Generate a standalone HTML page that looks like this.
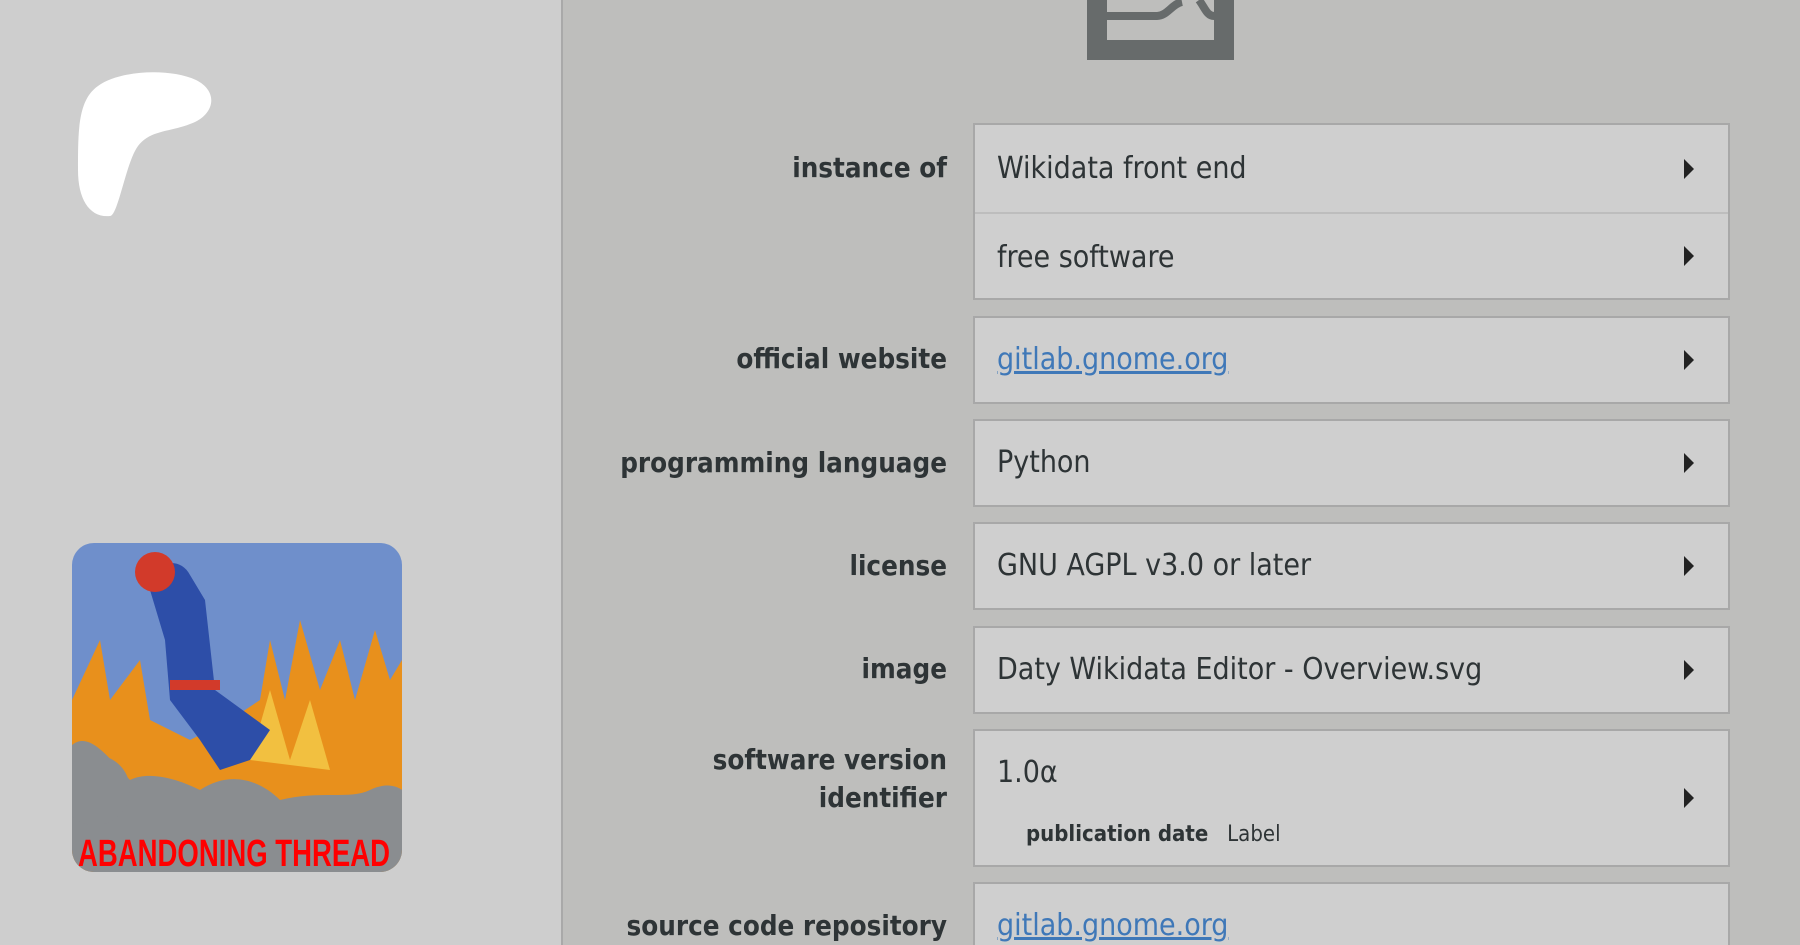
<!DOCTYPE html>
<html><head><meta charset="utf-8"><style>
*{margin:0;padding:0;box-sizing:border-box}
html{width:1800px;height:945px;overflow:hidden}
body{width:1800px;height:945px;overflow:hidden;background:#bebebc;font-family:"DejaVu Sans Condensed","Liberation Sans",sans-serif;position:relative;color:#2e3436}
#left{position:absolute;left:0;top:0;width:563px;height:945px;background:#cecece;border-right:2px solid #a9a9a9}
.lbl{position:absolute;right:853px;font-weight:bold;font-size:27.5px;text-align:right;line-height:38px;color:#2e3436}
.box{position:absolute;left:973px;width:757px;background:#cfcfcf;border:2px solid #a8a8a8}
.row{position:relative;height:87px;font-size:30px;line-height:87px;padding-left:22px}
.row+.row{border-top:2px solid #bdbdbd}
.arr{position:absolute;right:34px;top:50%;margin-top:-10px;width:0;height:0;border-top:10px solid transparent;border-bottom:10px solid transparent;border-left:10px solid #222}
a{color:#3f78b8;text-decoration:underline}
</style></head><body>
<div id="left">
<svg style="position:absolute;left:0;top:0" width="563" height="945">
<path d="M98 86 C120 70 170 68 196 80 C220 92 214 116 190 124 C170 132 150 130 138 146 C126 162 118 216 110 216 C90 218 78 200 78 170 C78 130 78 100 98 86Z" fill="#fff"/>
<defs><clipPath id="c"><rect x="72" y="543" width="330" height="329" rx="22"/></clipPath></defs>
<g clip-path="url(#c)">
<rect x="72" y="543" width="330" height="329" fill="#6f8fcb"/>
<path d="M72 700 L100 640 L110 700 L140 660 L150 720 L190 740 L230 720 L260 700 L270 640 L285 700 L300 620 L320 690 L340 640 L355 700 L375 630 L390 680 L402 660 L402 872 L72 872Z" fill="#e8901c"/>
<path d="M250 760 L270 690 L290 760 L310 700 L330 770Z" fill="#f2c040"/>
<path d="M72 745 C90 730 110 760 130 780 C150 770 180 780 200 790 C230 770 260 780 280 800 C320 790 350 800 370 790 C390 780 402 790 402 790 L402 872 L72 872Z" fill="#8a8d90"/>
<circle cx="95" cy="790" r="35" fill="#8a8d90"/>
<path d="M150 590 C150 560 180 555 190 575 L205 600 L215 690 L270 730 L250 760 L220 770 L200 740 L170 700 L165 640 Z" fill="#2d4ea8"/>
<circle cx="155" cy="572" r="20" fill="#d23a2a"/>
<rect x="170" y="680" width="50" height="10" fill="#d23a2a"/>
<text x="78" y="866" font-family="Liberation Sans,sans-serif" font-weight="bold" font-size="38" fill="#f00" textLength="312" lengthAdjust="spacingAndGlyphs">ABANDONING THREAD</text>
</g>
</svg>
</div>
<svg style="position:absolute;left:1087px;top:0" width="147" height="61">
<path d="M0 0 H147 V60 H0Z M20 0 V40 H127 V0Z" fill="#676b6b" fill-rule="evenodd"/>
<path d="M20 16 H70 C80 16 85 4 95 2 M112 0 C118 8 120 16 127 16" stroke="#676b6b" stroke-width="8" fill="none"/>
</svg>

<div class="lbl" style="top:149px">instance of</div>
<div class="box" style="top:123px;height:177px">
<div class="row" style="height:87px">Wikidata front end<span class="arr"></span></div>
<div class="row" style="height:86px">free software<span class="arr"></span></div>
</div>

<div class="lbl" style="top:340px">official website</div>
<div class="box" style="top:316px;height:88px"><div class="row" style="height:84px;line-height:84px"><a>gitlab.gnome.org</a><span class="arr"></span></div></div>

<div class="lbl" style="top:444px">programming language</div>
<div class="box" style="top:419px;height:88px"><div class="row" style="height:84px;line-height:84px">Python<span class="arr"></span></div></div>

<div class="lbl" style="top:547px">license</div>
<div class="box" style="top:522px;height:88px"><div class="row" style="height:84px;line-height:84px">GNU AGPL v3.0 or later<span class="arr"></span></div></div>

<div class="lbl" style="top:650px">image</div>
<div class="box" style="top:626px;height:88px"><div class="row" style="height:84px;line-height:84px">Daty Wikidata Editor - Overview.svg<span class="arr"></span></div></div>

<div class="lbl" style="top:741px">software version<br>identifier</div>
<div class="box" style="top:729px;height:138px"><div class="row" style="height:134px;line-height:1">
<div style="position:absolute;left:22px;top:27px">1.0α</div>
<div style="position:absolute;left:51px;top:93px;font-size:22px"><b>publication date</b>&nbsp;&nbsp; Label</div>
<span class="arr"></span></div></div>

<div class="lbl" style="top:907px">source code repository</div>
<div class="box" style="top:882px;height:80px"><div class="row" style="height:84px;line-height:84px"><a>gitlab.gnome.org</a></div></div>
</body></html>
